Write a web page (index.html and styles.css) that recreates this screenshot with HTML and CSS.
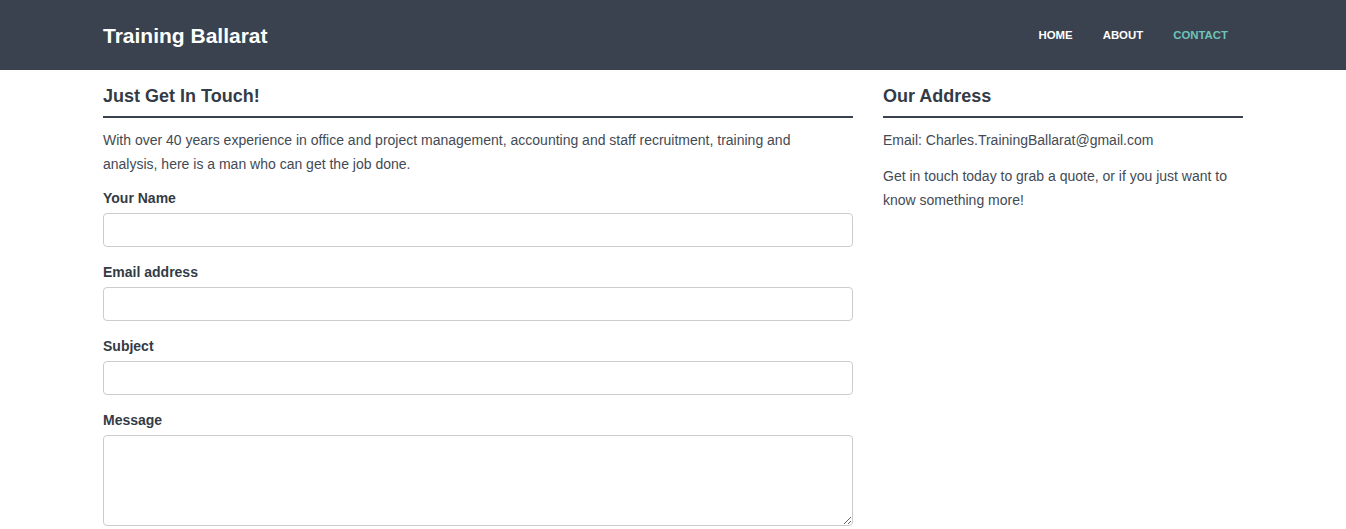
FILE: index.html
```html
<!DOCTYPE html>
<html lang="en">
<head>
<meta charset="utf-8">
<title>Training Ballarat - Contact</title>
<link rel="stylesheet" href="styles.css">
</head>
<body>
<header class="navbar">
  <div class="container navbar-inner">
    <a class="brand" href="#">Training Ballarat</a>
    <nav class="nav">
      <a href="#" class="nav-link">HOME</a>
      <a href="#" class="nav-link">ABOUT</a>
      <a href="#" class="nav-link active">CONTACT</a>
    </nav>
  </div>
</header>
<main class="container content">
  <section class="col-main">
    <h3 class="section-title">Just Get In Touch!</h3>
    <p class="intro">With over 40 years experience in office and project management, accounting and staff recruitment, training and analysis, here is a man who can get the job done.</p>
    <form class="form">
      <div class="form-group">
        <label for="name">Your Name</label>
        <input id="name" type="text" class="form-control">
      </div>
      <div class="form-group">
        <label for="email">Email address</label>
        <input id="email" type="email" class="form-control">
      </div>
      <div class="form-group">
        <label for="subject">Subject</label>
        <input id="subject" type="text" class="form-control">
      </div>
      <div class="form-group">
        <label for="message">Message</label>
        <textarea id="message" class="form-control textarea"></textarea>
      </div>
    </form>
  </section>
  <aside class="col-side">
    <h3 class="section-title">Our Address</h3>
    <p>Email: Charles.TrainingBallarat@gmail.com</p>
    <p>Get in touch today to grab a quote, or if you just want to know something more!</p>
  </aside>
</main>
</body>
</html>
```
FILE: styles.css
```css
* { box-sizing: border-box; }
html, body { margin: 0; padding: 0; }
body {
  font-family: "Liberation Sans", Arial, sans-serif;
  font-size: 14px;
  line-height: 24px;
  color: #434a54;
  background: #fff;
}
.container {
  width: 1170px;
  margin: 0 auto;
  padding: 0 15px;
}
.navbar {
  background: #39424e;
  height: 70px;
}
.navbar-inner {
  display: flex;
  align-items: center;
  justify-content: space-between;
  height: 70px;
}
.brand {
  color: #fff;
  font-weight: bold;
  font-size: 21px;
  text-decoration: none;
  line-height: 22px;
  padding-top: 1px;
}
.nav {
  display: flex;
}
.nav-link {
  color: #fff;
  font-size: 11.4px;
  font-weight: bold;
  text-decoration: none;
  padding: 0 15px;
  line-height: 20px;
}
.nav-link.active { color: #6fc3b8; }
.content {
  display: flex;
  gap: 30px;
}
.col-main { width: 750px; }
.col-side { width: 360px; }
.section-title {
  margin: 16px 0 10px;
  padding-bottom: 10px;
  border-bottom: 2px solid #39424e;
  font-size: 18px;
  line-height: 20px;
  font-weight: bold;
  color: #333b46;
}
p { margin: 0 0 12px; }
.intro { max-width: 735px; }
.form-group { margin-bottom: 15px; }
label {
  display: block;
  font-weight: bold;
  line-height: 20px;
  margin-bottom: 5px;
  color: #333b46;
}
.form-control {
  display: block;
  width: 100%;
  height: 34px;
  border: 1px solid #ccc;
  border-radius: 4px;
  background: #fff;
  font: inherit;
  padding: 6px 12px;
}
.textarea { height: 91px; resize: vertical; }
```
